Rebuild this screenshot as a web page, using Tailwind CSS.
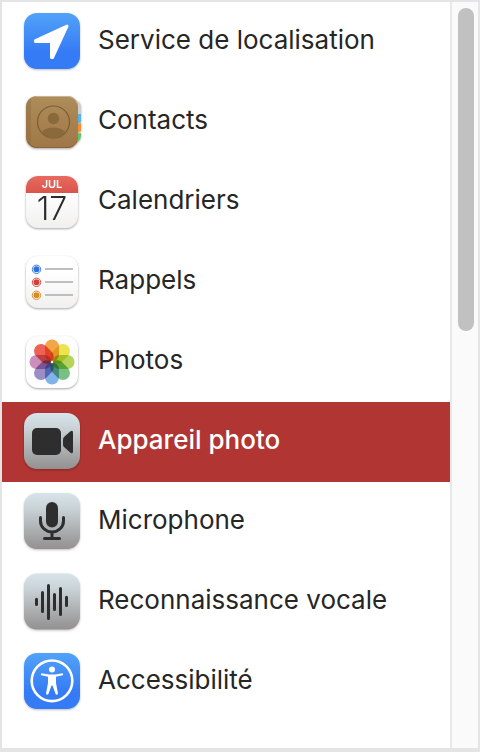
<!DOCTYPE html>
<html lang="fr">
<head>
  <meta charset="UTF-8" />
  <meta name="viewport" content="width=device-width, initial-scale=1.0"/>
  <title>Confidentialité</title>
  <script src="https://cdn.jsdelivr.net/npm/@tailwindcss/browser@4"></script>
</head>
<body class="flex min-h-screen border-2 border-b-4 border-[#e4e4e6] bg-white font-['Inter',sans-serif] text-[26px] text-[#262626]">

<!-- shared gradients -->
<svg class="absolute size-0" aria-hidden="true">
  <defs>
    <linearGradient id="blue" x2="0" y2="1"><stop offset="0" stop-color="#52a2f8"/><stop offset=".7" stop-color="#357bf6"/><stop offset="1" stop-color="#357bf6"/></linearGradient>
    <linearGradient id="grey" x2="0" y2="1"><stop offset="0" stop-color="#d7e4ea"/><stop offset=".25" stop-color="#cbd5d9"/><stop offset="1" stop-color="#939090"/></linearGradient>
    <linearGradient id="paper" x2="0" y2="1"><stop offset=".3" stop-color="#ffffff"/><stop offset="1" stop-color="#f1f0ef"/></linearGradient>
    <linearGradient id="leather" x2="0" y2="1"><stop offset="0" stop-color="#ad8d59"/><stop offset="1" stop-color="#a07747"/></linearGradient>
    <linearGradient id="red" x2="0" y2="1"><stop offset="0" stop-color="#e96a60"/><stop offset="1" stop-color="#d9554c"/></linearGradient>
  </defs>
</svg>

<nav class="grow" aria-label="Services">
  <ul>
    <li>
      <a href="#localisation" class="flex h-20 items-center gap-4 pb-0.5 pl-5">
        <svg class="size-[60px] shrink-0 drop-shadow-[0_1px_1px_#00000040]" viewBox="0 0 60 60">
          <rect x="2" y="2" width="56" height="56" rx="13" fill="url(#blue)"/>
          <path d="M45 15 13.5 29.5V30.5H29.5V46.5H30.5Z" fill="#fff" stroke="#fff" stroke-width="3" stroke-linejoin="round"/>
        </svg>
        <span class="pb-1">Service de localisation</span>
      </a>
    </li>
    <li>
      <a href="#contacts" class="flex h-20 items-center gap-4 pb-0.5 pl-5">
        <svg class="size-[60px] shrink-0 drop-shadow-[0_1px_1px_#00000059]" viewBox="0 0 60 60">
          <path d="M52 9Q59 10 59 16V23H52Z" fill="#cfcfcf"/>
          <path d="M52 23H59V31L52 34Z" fill="#5ab2e6"/>
          <path d="M52 34 59 32V40L52 43Z" fill="#f0913a"/>
          <path d="M52 43 59 42V45Q58 51 52 52Z" fill="#65c466"/>
          <rect x="4" y="5" width="52" height="52" rx="11" fill="url(#leather)"/>
          <path d="M9 7Q4 9 4 16V46Q4 53 9 55Z" fill="#8a6538" opacity=".35"/>
          <path d="M14 5.5H46Q53 6 55 12" fill="none" stroke="#c5b492"/>
          <path d="M6 51Q9 56.5 15 56.5H46Q53 56 55 50" fill="none" stroke="#896339"/>
          <circle cx="31.500" cy="31" r="16" fill="none" stroke="#7d5c36" stroke-width="1.2"/>
          <circle cx="31.500" cy="27.500" r="5.800" fill="#8a693b"/>
          <path d="M19.5 41Q24 36.5 31.5 36.5T43.5 41Q39 47 31.5 47T19.5 41Z" fill="#8a693b"/>
        </svg>
        <span class="pb-1">Contacts</span>
      </a>
    </li>
    <li>
      <a href="#calendriers" class="flex h-20 items-center gap-4 pb-0.5 pl-5">
        <svg class="size-[60px] shrink-0 drop-shadow-[0_1px_1px_#00000059]" viewBox="0 0 60 60">
          <rect x="4" y="5" width="52" height="52" rx="12" fill="url(#paper)"/>
          <path d="M4 22V17A12 12 0 0 1 16 5H44A12 12 0 0 1 56 17V22Z" fill="url(#red)"/>
          <text x="30" y="17" text-anchor="middle" font-size="11" font-weight="600" fill="#fff">JUL</text>
          <text x="30" y="49" text-anchor="middle" font-size="32" font-weight="300" fill="#2c2c2c">17</text>
        </svg>
        <span class="pb-1">Calendriers</span>
      </a>
    </li>
    <li>
      <a href="#rappels" class="flex h-20 items-center gap-4 pb-0.5 pl-5">
        <svg class="size-[60px] shrink-0 drop-shadow-[0_1px_1px_#00000059]" viewBox="0 0 60 60">
          <rect x="4" y="5" width="52" height="52" rx="12" fill="url(#paper)"/>
          <g fill="#fff">
            <circle cx="14.5" cy="18.3" r="4.2" stroke="#3b7ce0"/>
            <circle cx="14.5" cy="31.3" r="4.2" stroke="#db4a42"/>
            <circle cx="14.5" cy="44.3" r="4.2" stroke="#dc9330"/>
          </g>
          <circle cx="14.5" cy="18.3" r="3" fill="#2f70df"/>
          <circle cx="14.5" cy="31.3" r="3" fill="#d63e38"/>
          <circle cx="14.5" cy="44.3" r="3" fill="#db8c26"/>
          <path d="M23 18H51M23 31H51M23 44H51" stroke="#bebec2" stroke-width="2"/>
        </svg>
        <span class="pb-1">Rappels</span>
      </a>
    </li>
    <li>
      <a href="#photos" class="flex h-20 items-center gap-4 pb-0.5 pl-5">
        <svg class="size-[60px] shrink-0 drop-shadow-[0_1px_1px_#00000059]" viewBox="0 0 60 60">
          <rect x="4" y="5" width="52" height="52" rx="12" fill="#fdfdfd"/>
          <g class="*:mix-blend-multiply" opacity=".93">
            <rect x="23" y="8.5" width="14" height="22" rx="7" fill="#f3a03b"/>
            <rect x="23" y="8.5" width="14" height="22" rx="7" fill="#ebe33f" transform="rotate(45 30 31)"/>
            <rect x="23" y="8.5" width="14" height="22" rx="7" fill="#b0d14d" transform="rotate(90 30 31)"/>
            <rect x="23" y="8.5" width="14" height="22" rx="7" fill="#70bc7c" transform="rotate(135 30 31)"/>
            <rect x="23" y="8.5" width="14" height="22" rx="7" fill="#77aee5" transform="rotate(180 30 31)"/>
            <rect x="23" y="8.5" width="14" height="22" rx="7" fill="#9286c2" transform="rotate(225 30 31)"/>
            <rect x="23" y="8.5" width="14" height="22" rx="7" fill="#c987b7" transform="rotate(270 30 31)"/>
            <rect x="23" y="8.5" width="14" height="22" rx="7" fill="#ed5649" transform="rotate(315 30 31)"/>
          </g>
          <circle cx="30" cy="31" r="1.2" fill="#fff"/>
        </svg>
        <span class="pb-1">Photos</span>
      </a>
    </li>
    <li>
      <a href="#appareil-photo" aria-current="page" class="flex h-20 items-center gap-4 bg-[#b13533] pb-0.5 pl-5 font-medium text-white">
        <svg class="size-[60px] shrink-0 drop-shadow-[0_1px_1px_#00000040]" viewBox="0 0 60 60">
          <rect x="2" y="2" width="56" height="56" rx="13" fill="url(#grey)"/>
          <rect x="10" y="17" width="29" height="27" rx="5" fill="#2e2e2e"/>
          <path d="M41 28.5Q41 27 42 26L48.500 20.3Q51 18.8 51 21.5V40.5Q51 43.2 48.500 41.7L42 36Q41 35 41 33.5Z" fill="#2e2e2e"/>
        </svg>
        <span class="pb-1">Appareil photo</span>
      </a>
    </li>
    <li>
      <a href="#microphone" class="flex h-20 items-center gap-4 pb-0.5 pl-5">
        <svg class="size-[60px] shrink-0 drop-shadow-[0_1px_1px_#00000040]" viewBox="0 0 60 60">
          <rect x="2" y="2" width="56" height="56" rx="13" fill="url(#grey)"/>
          <rect x="24" y="11" width="12" height="25.5" rx="6" fill="#2e2e2e"/>
          <path d="M18.5 26.5V30A11.5 11 0 0 0 41.5 30V26.5M30 41V47M22.5 47.5H37.5" fill="none" stroke="#2e2e2e" stroke-width="3" stroke-linecap="round"/>
        </svg>
        <span class="pb-1">Microphone</span>
      </a>
    </li>
    <li>
      <a href="#reconnaissance-vocale" class="flex h-20 items-center gap-4 pb-0.5 pl-5">
        <svg class="size-[60px] shrink-0 drop-shadow-[0_1px_1px_#00000040]" viewBox="0 0 60 60">
          <rect x="2" y="2.5" width="56" height="56" rx="13" fill="url(#grey)"/>
          <path d="M14.5 28.2V33.5M20.5 21.5V40.5M26.5 14.5V47.5M32.5 23.5V38.5M38.5 17.5V43.5M44.5 26.2V34.5" stroke="#2e2e2e" stroke-width="3" stroke-linecap="round"/>
        </svg>
        <span class="pb-1">Reconnaissance vocale</span>
      </a>
    </li>
    <li>
      <a href="#accessibilite" class="flex h-20 items-center gap-4 pb-0.5 pl-5">
        <svg class="size-[60px] shrink-0 drop-shadow-[0_1px_1px_#00000040]" viewBox="0 0 60 60">
          <rect x="2" y="2" width="56" height="56" rx="13" fill="url(#blue)"/>
          <circle cx="30" cy="29.8" r="20.3" fill="none" stroke="#fff" stroke-width="2.6"/>
          <circle cx="30" cy="18.5" r="3" fill="#fff"/>
          <path d="M19.5 22.3 27 23.5H33L40.5 22.3Q41.800 23.3 40.7 24.2L34 25.8V32L36 42.5Q35.3 44.5 33.7 43.3L30.5 34.5H29.5L26.3 43.3Q24.7 44.5 24 42.5L26 32V25.8L19.3 24.2Q18.2 23.3 19.5 22.3Z" fill="#fff"/>
        </svg>
        <span class="pb-1">Accessibilité</span>
      </a>
    </li>
  </ul>
</nav>

<!-- scrollbar -->
<div class="flex w-7 shrink-0 border-l-2 border-[#e8e8e8] bg-[#fafafa] py-1.5 pr-1 pl-1.5" aria-hidden="true">
  <div class="h-[44%] w-4 rounded-full bg-[#c1c1c1]"></div>
</div>

</body>
</html>
